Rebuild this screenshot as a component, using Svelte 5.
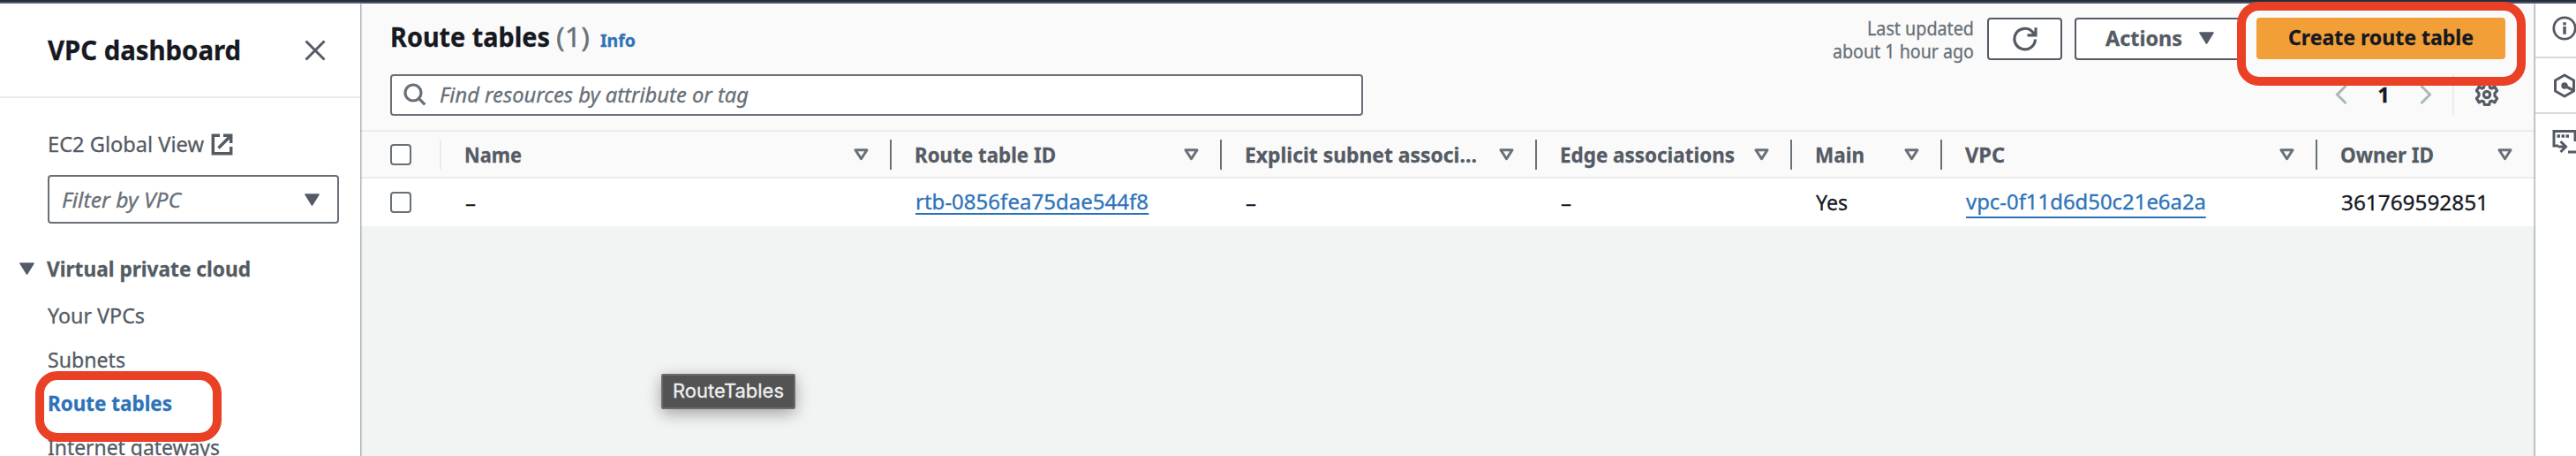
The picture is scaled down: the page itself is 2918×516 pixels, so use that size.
<script>
  // Condenses a label horizontally so that it occupies the given width.
  function fit(node, width) {
    const natural = node.getBoundingClientRect().width;
    node.style.transform = `scaleX(${width / natural})`;
    node.style.marginRight = `${width - natural}px`;
  }

  const columns = [
    { label: 'Name', w: 65, value: '–', vw: 12 },
    { label: 'Route table ID', w: 160, value: 'rtb-0856fea75dae544f8', vw: 264, link: true },
    { label: 'Explicit subnet associ…', w: 263, value: '–', vw: 12 },
    { label: 'Edge associations', w: 198, value: '–', vw: 12 },
    { label: 'Main', w: 56, value: 'Yes', vw: 36 },
    { label: 'VPC', w: 45, value: 'vpc-0f11d6d50c21e6a2a', vw: 272, link: true, low: true },
    { label: 'Owner ID', w: 106, value: '361769592851', vw: 167 }
  ];
  const links = [
    { label: 'Your VPCs', w: 110 },
    { label: 'Subnets', w: 88 },
    { label: 'Route tables', w: 141, active: true },
    { label: 'Internet gateways', w: 195 }
  ];
</script>

{#snippet caret()}
  <svg class="caret" width="17" height="14" viewBox="0 0 17 14"><path d="M1 1h15L8.500 13z" fill="#545b64" stroke="#545b64" stroke-width="1.600" stroke-linejoin="round" /></svg>
{/snippet}

<div class="page">
  <div class="topbar"></div>
  <div class="body">
    <nav class="sidebar">
      <header>
        <h2><span use:fit={219}>VPC dashboard</span></h2>
        <svg width="24" height="24" viewBox="0 0 24 24"><path d="M1.500 1.500l21 21M22.500 1.500l-21 21" stroke="#545b64" stroke-width="3" /></svg>
      </header>
      <div class="global">
        <span use:fit={177}>EC2 Global View</span>
        <svg width="25" height="25" viewBox="0 0 25 25" fill="none" stroke="#545b64" stroke-width="3.500"><path d="M10 2.300H2.300v20.400h20.400V15M14 2.300h8.700V11M22 3L8.500 16.500" /></svg>
      </div>
      <div class="select"><i use:fit={135}>Filter by VPC</i>{@render caret()}</div>
      <div class="section">{@render caret()}<b use:fit={231}>Virtual private cloud</b></div>
      <ul>
        {#each links as l}
          <li class:active={l.active}><span use:fit={l.w}>{l.label}</span></li>
        {/each}
      </ul>
      <div class="mark mark-nav"></div>
    </nav>

    <main>
      <section class="top">
        <div class="titlebar">
          <h1><span use:fit={181}>Route tables</span></h1>
          <span class="count"><span use:fit={38}>(1)</span></span>
          <span class="info"><span use:fit={40}>Info</span></span>
          <div class="updated"><span use:fit={121}>Last updated</span><br /><span use:fit={160}>about 1 hour ago</span></div>
          <button class="refresh" aria-label="Refresh">
            <svg width="28" height="28" viewBox="0 0 28 28" fill="none" stroke="#545b64" stroke-width="3.200"><path d="M25.500 14.500A11.800 11.800 0 1 1 22.500 6.200L24.500 9.500M26 1.200v8.600h-9.500" /></svg>
          </button>
          <button class="actions"><span use:fit={87}>Actions</span>{@render caret()}</button>
          <button class="create"><span use:fit={210}>Create route table</span></button>
        </div>
        <div class="tools">
          <div class="search">
            <svg width="26" height="26" viewBox="0 0 26 26" fill="none" stroke="#687078" stroke-width="3.200"><circle cx="11" cy="11" r="9" /><path d="M17.300 17.300l7 7" /></svg>
            <i use:fit={350}>Find resources by attribute or tag</i>
          </div>
          <div class="pager">
            <svg width="14" height="24" viewBox="0 0 14 24"><path d="M12.500 2L2.500 12l10 10" fill="none" stroke="#aab7b8" stroke-width="3" /></svg>
            <b>1</b>
            <svg width="14" height="24" viewBox="0 0 14 24"><path d="M1.500 2l10 10-10 10" fill="none" stroke="#aab7b8" stroke-width="3" /></svg>
          </div>
          <div class="prefs">
            <svg width="28" height="28" viewBox="0 0 28 28" fill="none" stroke="#545b64" stroke-width="3.200" stroke-linejoin="round"><path d="M11.300 2.500h5.400l.8 3.700 2 .9 3.300-2 2.800 4.600L23 12.500v3l2.600 2.800-2.800 4.600-3.300-1.800-2 .9-.8 3.500h-5.400l-.8-3.500-2-.9-3.300 1.800-2.800-4.600L5 15.500v-3L2.400 9.700l2.800-4.600 3.300 2 2-.9z" /><circle cx="14" cy="14" r="3.600" /></svg>
          </div>
        </div>
      </section>

      <div class="row head">
        <div class="check"><span class="box"></span></div>
        {#each columns as c}
          <div class="cell">
            <b use:fit={c.w}>{c.label}</b>
            <svg width="17" height="14" viewBox="0 0 17 14"><path d="M2 1.700h13L8.500 11.700z" fill="none" stroke="#687078" stroke-width="3" stroke-linejoin="round" /></svg>
          </div>
        {/each}
      </div>
      <div class="row data">
        <div class="check"><span class="box"></span></div>
        {#each columns as c}
          <div class="cell"><span use:fit={c.vw} class:link={c.link} class:low={c.low}>{c.value}</span></div>
        {/each}
      </div>
    </main>

    <aside>
      <div class="tool"><svg width="28" height="28" viewBox="0 0 28 28"><circle cx="14" cy="14" r="12.200" fill="none" stroke="#545b64" stroke-width="2.800" /><path d="M12.300 7.200h3.500v3.200h-3.500zM12.300 12h3.500v8.700h-3.500z" fill="#545b64" /></svg></div>
      <div class="tool"><svg width="28" height="28" viewBox="0 0 28 28"><path d="M14 2l10.500 6v12L14 26 3.500 20V8z" fill="none" stroke="#545b64" stroke-width="3" stroke-linejoin="round" /><circle cx="14" cy="14" r="3.700" fill="#545b64" /><path d="M14 14l9.500 5" stroke="#545b64" stroke-width="3.200" /></svg></div>
      <div class="tool"><svg width="32" height="28" viewBox="0 0 32 28" fill="none" stroke="#545b64" stroke-width="3"><path d="M7 19H2V2.500h24V14M7 20h9M9.500 14l6 6-6 6" /><path d="M18 26h12" /><path d="M5.500 8h13.500" stroke-dasharray="3.500 1.500" stroke-width="3.500" /></svg></div>
    </aside>
  </div>
  <div class="mark mark-create"></div>
  <div class="tooltip"><span use:fit={126}>RouteTables</span></div>
</div>

<style>
  :global(body) { margin: 0; }
  .page { position: relative; width: 2918px; height: 516px; overflow: hidden; background: #f2f3f3; font: 24px/36px "Noto Sans", sans-serif; color: #16191f; -webkit-text-stroke: 0.3px; }
  .page * { box-sizing: border-box; }
  svg { display: block; flex: none; }
  h1, h2, ul { margin: 0; padding: 0; }
  span, i, b { white-space: nowrap; }
  h1 span, h2 span, .global span, i, b, li span, .count span, .info span, .updated span, button span, .cell span, .tooltip span { display: inline-block; flex: none; transform-origin: left center; }
  .topbar { height: 4px; background: #232f3e; border-bottom: 2px solid #4c5561; }
  .body { display: grid; grid-template-columns: 408px 2464px 46px; height: 512px; }

  .sidebar { position: relative; z-index: 1; background: #fff; color: #545b64; box-shadow: 1px 0 2px #8a969b; }
  .sidebar header { display: flex; align-items: center; justify-content: space-between; height: 107px; padding: 1px 39px 0 54px; border-bottom: 2px solid #eaeded; }
  h2 { font-size: 30px; line-height: 40px; color: #16191f; }
  .global { display: flex; align-items: center; gap: 8px; height: 36px; margin: 34px 0 0 54px; }
  .select { display: flex; align-items: center; justify-content: space-between; width: 330px; height: 55px; margin: 17px 0 0 54px; padding: 0 20px 0 14px; background: #fff; border: 2px solid #687078; border-radius: 4px; color: #687078; }
  .section { display: flex; align-items: center; gap: 14px; height: 36px; margin: 33px 0 0 22px; }
  ul { list-style: none; padding: 17px 0 0 54px; }
  li { height: 49.700px; }
  .active { color: #2e73b8; font-weight: 700; }

  main { display: flex; flex-direction: column; }
  .top { height: 145px; padding: 16px 34px 0 34px; background: #fafafa; border-bottom: 2px solid #eaeded; }
  .titlebar { display: flex; height: 48px; }
  h1 { font-size: 30px; line-height: 43px; }
  .count { margin-left: 7px; font-size: 30px; line-height: 43px; color: #687078; }
  .info { margin-left: 12px; font-size: 20px; line-height: 51px; font-weight: 700; color: #2e73b8; }
  .updated { margin-left: auto; text-align: right; font-size: 21px; line-height: 26px; color: #687078; margin-top: -1px; }
  button { display: flex; align-items: center; height: 48px; margin: 0; padding: 0 0 3px; font: 700 24px/36px "Noto Sans", sans-serif; color: #545b64; background: #fff; border: 2px solid #545b64; border-radius: 4px; }
  .refresh { justify-content: center; width: 85px; margin-left: 15px; padding: 0 0 1px; }
  .actions { width: 192px; margin-left: 14px; padding-left: 33px; gap: 19px; }
  .create { justify-content: center; width: 282px; height: 47px; margin-left: 14px; color: #16191f; background: #f29f38; border-color: #f29f38; }
  .tools { display: flex; align-items: center; height: 48px; margin-top: 15px; }
  .search { display: flex; align-items: center; gap: 15px; width: 1102px; height: 47px; padding: 0 13px 1px; background: #fff; border: 2px solid #687078; border-radius: 4px; color: #687078; }
  .pager { display: flex; align-items: center; justify-content: space-between; width: 110px; margin-left: auto; }
  .pager b { line-height: 24px; }
  .prefs { display: flex; align-items: center; height: 48px; margin: 0 7px 0 23px; padding-left: 23px; border-left: 2px solid #eaeded; }

  .row { display: grid; grid-template-columns: 92px 510px 374px 357px 289px 170px 425px 247px; align-items: center; }
  .head { height: 53px; background: #fafafa; border-bottom: 2px solid #eaeded; color: #545b64; }
  .check { display: flex; align-items: center; height: 34px; padding-left: 34px; }
  .box { width: 24px; height: 24px; background: #fff; border: 2px solid #687078; border-radius: 4px; }
  .head .check { border-right: 2px solid #eaeded; }
  .cell { display: flex; align-items: center; height: 34px; padding-left: 27px; }
  .head .cell { justify-content: space-between; padding-left: 26px; padding-right: 24px; border-right: 2px solid #687078; }
  .head .cell:last-child { border-color: transparent; }
  .data { height: 54px; background: #fff; }
  .link { line-height: 26px; color: #2e73b8; border-bottom: 2px solid #2e73b8; margin-top: -1px; }
  .low { padding-bottom: 4px; margin-top: 4px; }

  aside { z-index: 1; background: #fff; box-shadow: -1px 0 2px #8a969b; overflow: hidden; clip-path: inset(0 0 0 -4px); }
  .tool { display: flex; align-items: center; height: 63px; padding-left: 19px; border-bottom: 2px solid #d5dbdb; }
  .tool:first-child { height: 62px; padding-bottom: 4px; }
  .tool:last-child { border: 0; height: 62px; }

  .mark { position: absolute; border: 10px solid #ea4025; border-radius: 25px; z-index: 2; }
  .mark-nav { left: 40px; top: 416px; width: 211px; height: 80px; }
  .mark-create { left: 2534px; top: 2px; width: 327px; height: 95px; }
  .tooltip { position: absolute; left: 749px; top: 423px; width: 152px; height: 40px; padding-left: 11px; border: 2px solid #6b6b6b; border-radius: 2px; background: #535353; color: #f0f0f0; font: 22px/35px Inter, sans-serif; box-shadow: 0 5px 18px #0005; }
</style>
